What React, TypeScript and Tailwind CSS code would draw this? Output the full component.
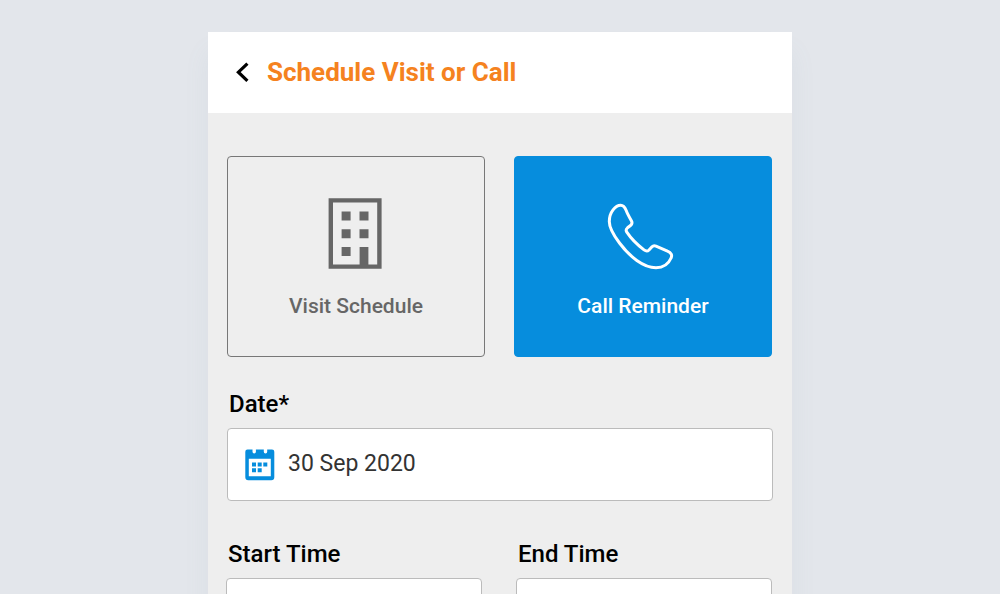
import type { ReactNode } from "react"

function BackIcon() {
  return (
    <svg width="14" height="20" viewBox="0 0 14 20" fill="none" aria-hidden="true">
      <path d="M12.400 1.600 3.400 10.200 12.400 18.800" stroke="#000" strokeWidth="3.200" />
    </svg>
  )
}

function BuildingIcon() {
  return (
    <svg width="72" height="76" viewBox="-8 -1 72 76" fill="#666" aria-hidden="true">
      <path
        fillRule="evenodd"
        d="M.6.2h53v70.600H.6zM5 4.600v61.800h26.600V49h8.800v17.400h8.800V4.600z"
      />
      <path d="M13.600 13.600h9v9h-9zM31.500 13.600h9v9h-9zM13.600 31.300h9v9h-9zM31.500 31.300h9v9h-9zM13.600 49h9v9h-9z" />
    </svg>
  )
}

function PhoneIcon() {
  return (
    <svg width="72" height="76" viewBox="-0.5 -6.5 72 76" fill="none" aria-hidden="true">
      <path
        d="M13.200 1.800C16 1.800 17.500 4 18.700 7C20 10.500 22 14 24 17.500C25 19.500 24.500 20.800 23 22L20 24.300C18.400 25.600 18.300 27 19.300 28.700C23.500 35 30 41.500 36.500 46.400C38.500 47.900 40 48 41.500 46.500L44.500 43.300C45.700 42 47 42 48.500 42.600L60 47.600C63.500 49 65 51.500 63.600 54.500C61 60.500 55.500 64.200 48.500 64.200C36 64.200 22 53 12 39.500C5.500 31 1.800 24 1.800 18C1.800 8.500 8 1.800 13.200 1.800Z"
        stroke="#fff"
        strokeWidth="3"
        strokeLinejoin="round"
      />
    </svg>
  )
}

function CalendarIcon() {
  return (
    <svg width="30" height="32" viewBox="0 0 30 32" fill="#068ddd" aria-hidden="true">
      <path
        fillRule="evenodd"
        d="M2.500.500H7.500v2.300a1.700 1.700 0 0 0 3.400 0V.500H18.800v2.300a1.700 1.700 0 0 0 3.400 0V.500H27a2.300 2.300 0 0 1 2.300 2.300v25.400A3 3 0 0 1 26.300 31.200h-23A3 3 0 0 1 .3 28.200V2.800A2.300 2.300 0 0 1 2.500.500zM3.800 9.700v17.600h22V9.700z"
      />
      <path d="M7 13.500h4v4H7zM12.700 13.500h4v4h-4zM18.300 13.500h4v4h-4zM7 19.200h4v4H7zM12.700 19.200h4v4h-4z" />
    </svg>
  )
}

interface OptionProps {
  icon: ReactNode
  label: string
  active?: boolean
}

function Option({ icon, label, active = false }: OptionProps) {
  return (
    <button
      type="button"
      aria-pressed={active}
      className={`flex h-[201px] flex-col items-center rounded border pt-10 text-[21px] leading-8 font-medium ${
        active ? "border-[#068ddd] bg-[#068ddd] text-white" : "border-[#777] text-[#666]"
      }`}
    >
      {icon}
      <span className="mt-[17px]">{label}</span>
    </button>
  )
}

function TimeField({ id, label }: { id: string; label: string }) {
  return (
    <div>
      <label htmlFor={id} className="block pl-0.5 text-2xl font-medium">
        {label}
      </label>
      <input
        id={id}
        type="text"
        className="mt-2 block h-[73px] w-full rounded border border-[#bbb] bg-white px-4 text-[23px] text-[#333]"
      />
    </div>
  )
}

export default function App() {
  return (
    <div className="min-h-screen bg-[#e3e6eb] pt-8 font-['Roboto',sans-serif] text-black">
      <main className="mx-auto max-w-[584px] bg-[#eee] pb-8 shadow-[0_20px_24px_rgba(120,150,180,0.08)]">
        <header className="flex h-[81px] items-center bg-white pb-0.5 pl-[27px]">
          <button type="button" aria-label="Back">
            <BackIcon />
          </button>
          <h1 className="ml-[18px] text-[26px] leading-8 font-bold text-[#f58220]">
            Schedule Visit or Call
          </h1>
        </header>

        <form className="pt-[43px]">
          <div className="grid grid-cols-2 gap-[29px] pr-5 pl-[19px]">
            <Option icon={<BuildingIcon />} label="Visit Schedule" />
            <Option icon={<PhoneIcon />} label="Call Reminder" active />
          </div>

          <div className="mt-[31px] px-[19px]">
            <label htmlFor="date" className="block pl-0.5 text-2xl font-medium">
              Date*
            </label>
            <div className="mt-2 flex h-[73px] items-center rounded border border-[#bbb] bg-white pl-[17px]">
              <CalendarIcon />
              <input
                id="date"
                type="text"
                defaultValue="30 Sep 2020"
                className="ml-[13px] min-w-0 flex-1 bg-transparent text-[23px] text-[#333] outline-none"
              />
            </div>
          </div>

          <div className="mt-[37px] grid grid-cols-2 gap-[34px] pr-5 pl-[18px]">
            <TimeField id="start-time" label="Start Time" />
            <TimeField id="end-time" label="End Time" />
          </div>
        </form>
      </main>
    </div>
  )
}
